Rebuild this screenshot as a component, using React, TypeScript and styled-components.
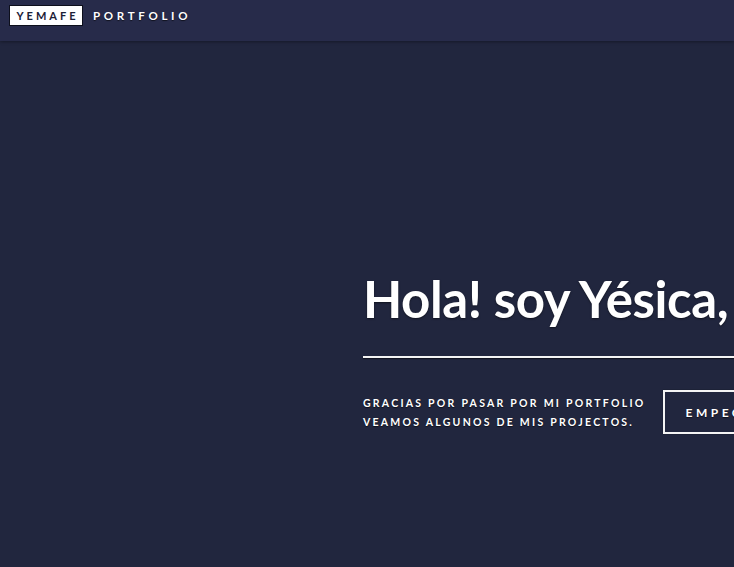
import React from "react";
import styled, { createGlobalStyle } from "styled-components";

const Global = createGlobalStyle`
  html, body { margin: 0; padding: 0; background: #21263e; overflow: hidden; }
  body { font-family: "Lato", "Open Sans", sans-serif; }
`;

const Page = styled.div`
  width: 734px;
  height: 567px;
  background: #21263e;
  overflow: hidden;
  display: flex;
  flex-direction: column;
`;

const Header = styled.header`
  height: 41px;
  background: #272b4a;
  box-shadow: 0 1px 3px rgba(0, 0, 0, 0.35);
  display: flex;
  align-items: flex-start;
  padding: 5px 0 0 9px;
  gap: 10px;
  box-sizing: border-box;
  flex-shrink: 0;
`;

const Logo = styled.div`
  background: #fff;
  color: #1c2036;
  border: 1px solid #0d0f1c;
  height: 21px;
  width: 74px;
  box-sizing: border-box;
  display: flex;
  align-items: center;
  justify-content: center;
  font-weight: 700;
  font-size: 11px;
  letter-spacing: 3px;
  padding-left: 3px;
`;

const Brand = styled.div`
  color: #fff;
  font-weight: 700;
  font-size: 11.5px;
  letter-spacing: 3.7px;
  height: 21px;
  display: flex;
  align-items: center;
  text-shadow: 0 1px 1px rgba(0, 0, 0, 0.6);
`;

const Hero = styled.main`
  flex: 1;
  padding: 227px 0 0 363px;
  white-space: nowrap;
  overflow: hidden;
`;

const Title = styled.h1`
  margin: 0;
  color: #fff;
  font-weight: 700;
  font-size: 51px;
  line-height: 62px;
  letter-spacing: -0.4px;
  text-shadow: 0 1px 2px rgba(0, 0, 0, 0.5);
`;

const Rule = styled.hr`
  margin: 26px 0 0 0;
  border: 0;
  height: 2px;
  background: #f4f4f4;
  box-shadow: 0 1px 1px rgba(0, 0, 0, 0.5);
`;

const Row = styled.div`
  display: flex;
  align-items: flex-start;
  margin-top: 32px;
  gap: 18px;
`;

const Sub = styled.p`
  margin: 4px 0 0 0;
  color: #fff;
  font-weight: 700;
  font-size: 10.5px;
  line-height: 19px;
  letter-spacing: 2.25px;
  text-shadow: 0 1px 1px rgba(0, 0, 0, 0.6);
`;

const Button = styled.button`
  flex-shrink: 0;
  background: transparent;
  border: 2px solid #f4f4f4;
  color: #fff;
  font-family: inherit;
  font-weight: 700;
  font-size: 12px;
  letter-spacing: 3.5px;
  height: 44px;
  padding: 0 20px;
  box-shadow: 0 0 1px rgba(0, 0, 0, 0.6);
  text-shadow: 0 1px 1px rgba(0, 0, 0, 0.6);
`;

export default function App() {
  return (
    <Page>
      <Global />
      <Header>
        <Logo>YEMAFE</Logo>
        <Brand>PORTFOLIO</Brand>
      </Header>
      <Hero>
        <Title>Hola! soy Yésica, desarrolladora web</Title>
        <Rule />
        <Row>
          <Sub>
            GRACIAS POR PASAR POR MI PORTFOLIO
            <br />
            VEAMOS ALGUNOS DE MIS PROJECTOS.
          </Sub>
          <Button>EMPECEMOS</Button>
        </Row>
      </Hero>
    </Page>
  );
}
